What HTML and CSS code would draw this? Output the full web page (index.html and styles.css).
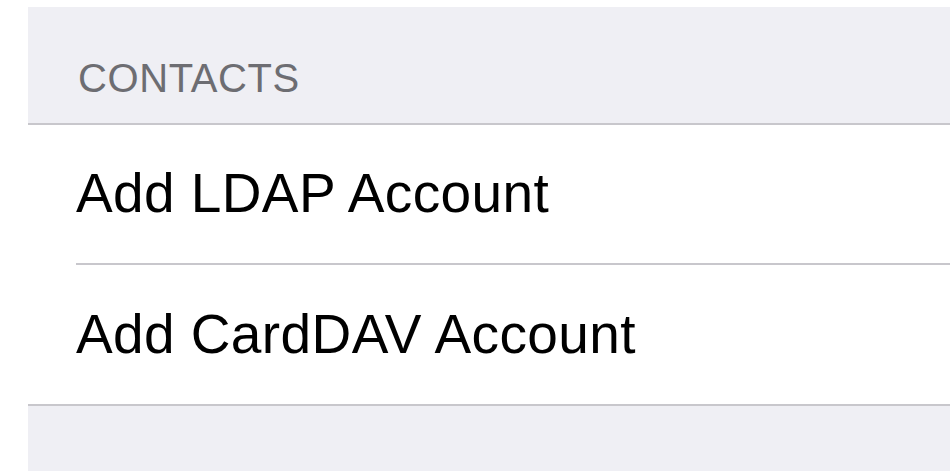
FILE: index.html
```html
<!DOCTYPE html>
<html lang="en">
<head>
  <meta charset="UTF-8">
  <meta name="viewport" content="width=device-width, initial-scale=1.0">
  <link rel="stylesheet" href="styles.css">
  <title>Contacts</title>
</head>
<body>
  <div class="settings">
    <div class="section-header">CONTACTS</div>
    <div class="group">
      <div class="cell">Add LDAP Account</div>
      <div class="cell">Add CardDAV Account</div>
    </div>
    <div class="section-footer"></div>
  </div>
</body>
</html>
```

FILE: styles.css
```css
body {
  margin: 0;
  background: #ffffff;
  font-family: "Liberation Sans", Arial, sans-serif;
}

.settings {
  margin: 7px 0 0 28px;
  background: #efeff4;
}

.section-header {
  padding: 51px 0 25px 50px;
  height: 40px;
  font-size: 40px;
  line-height: 40px;
  letter-spacing: 0.6px;
  color: #6d6d72;
}

.group {
  background: #ffffff;
  border-top: 2px solid #c8c7cc;
  border-bottom: 2px solid #c8c7cc;
}

.cell {
  margin-left: 48px;
  padding: 41px 0 42px 0;
  height: 55px;
  font-size: 55px;
  line-height: 55px;
  letter-spacing: 0.4px;
  color: #000000;
}

.cell + .cell {
  border-top: 2px solid #c8c7cc;
  padding-top: 42px;
}

.section-footer {
  height: 70px;
}
```
